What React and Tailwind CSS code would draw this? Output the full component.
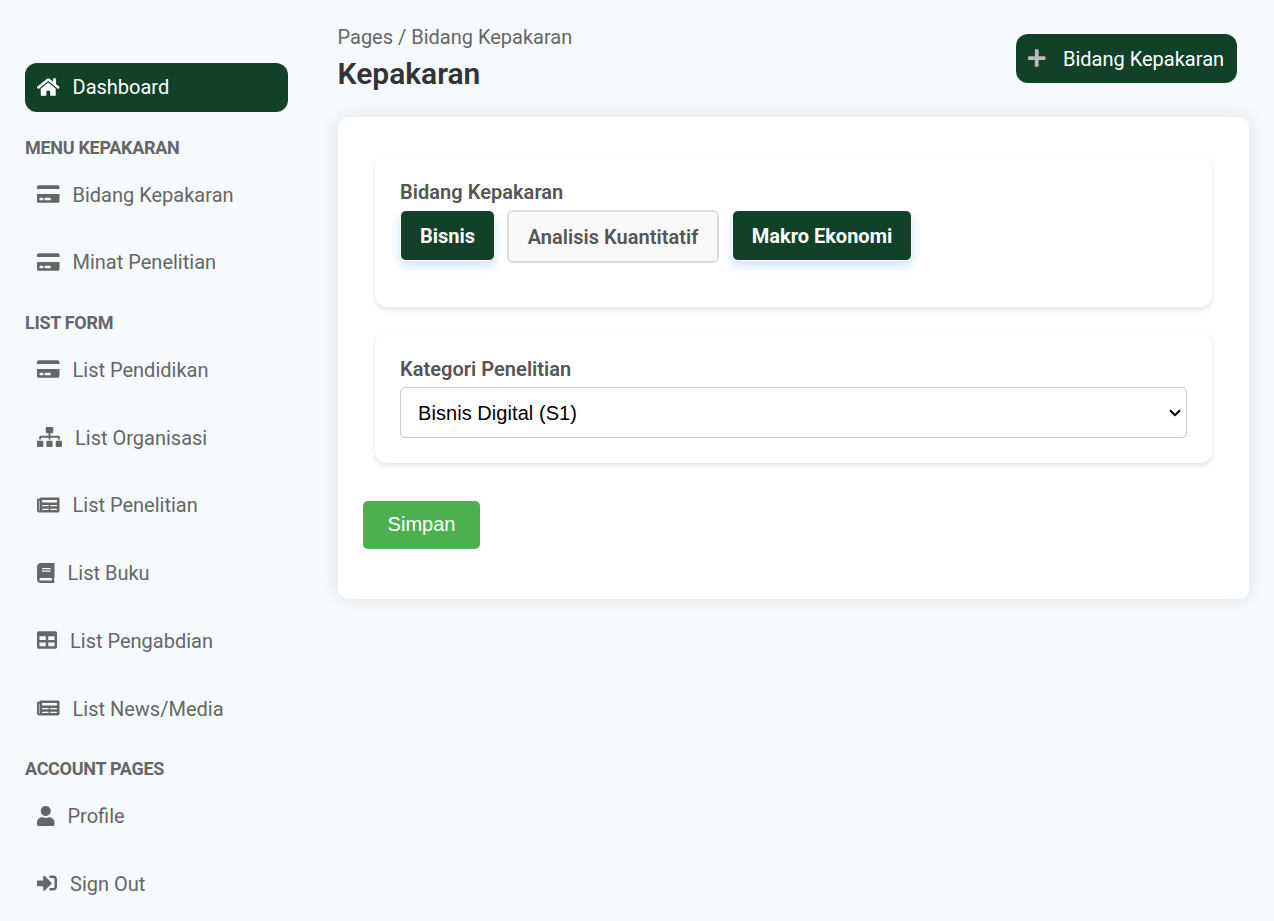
import React from "react";
import {
  FaHome,
  FaCreditCard,
  FaSitemap,
  FaNewspaper,
  FaBook,
  FaTable,
  FaUser,
  FaSignInAlt,
  FaPlus,
} from "react-icons/fa";

const menus = [
  {
    title: "MENU KEPAKARAN",
    items: [
      { label: "Bidang Kepakaran", icon: FaCreditCard, size: "w-[22.5px]" },
      { label: "Minat Penelitian", icon: FaCreditCard, size: "w-[22.5px]" },
    ],
  },
  {
    title: "LIST FORM",
    items: [
      { label: "List Pendidikan", icon: FaCreditCard, size: "w-[22.5px]" },
      { label: "List Organisasi", icon: FaSitemap, size: "w-[25px]" },
      { label: "List Penelitian", icon: FaNewspaper, size: "w-[22.5px]" },
      { label: "List Buku", icon: FaBook, size: "w-[17.5px]" },
      { label: "List Pengabdian", icon: FaTable, size: "w-5" },
      { label: "List News/Media", icon: FaNewspaper, size: "w-[22.5px]" },
    ],
  },
  {
    title: "ACCOUNT PAGES",
    items: [
      { label: "Profile", icon: FaUser, size: "w-[17.5px]" },
      { label: "Sign Out", icon: FaSignInAlt, size: "w-5" },
    ],
  },
];

function NavItem({ label, icon: Icon, size, active }) {
  return (
    <a
      className={
        "flex h-[48.5px] items-center gap-[13px] rounded-[12px] px-[12px] text-[20px] leading-6 " +
        (active ? "bg-[#114229] text-white" : "text-[#666666]")
      }
    >
      <Icon className={"mb-px h-5 shrink-0 " + size} />
      <span>{label}</span>
    </a>
  );
}

function Sidebar() {
  return (
    <aside className="w-[313px] shrink-0 pt-[63px] pr-[25px] pl-[25px]">
      <NavItem label="Dashboard" icon={FaHome} size="w-[22.5px]" active />
      {menus.map((menu) => (
        <nav key={menu.title}>
          <h2 className="mt-[26px] mb-[12.95px] text-[18px] leading-5 font-bold tracking-[-0.3px] text-[#666666]">
            {menu.title}
          </h2>
          <div className="flex flex-col gap-[19.25px]">
            {menu.items.map((item) => (
              <NavItem key={item.label} {...item} />
            ))}
          </div>
        </nav>
      ))}
    </aside>
  );
}

function Panel({ title, className, children }) {
  return (
    <section
      className={
        "rounded-[12px] bg-white px-[25px] pt-[25px] shadow-[0_2.5px_5px_rgba(0,0,0,0.1)] " + className
      }
    >
      <h3 className="h-[30px] text-[20px] leading-6 font-semibold tracking-[0.04px] text-[#555555]">{title}</h3>
      {children}
    </section>
  );
}

function ActiveChip({ children, className }) {
  return (
    <button
      className={
        "h-[51px] rounded-[6px] border border-white bg-[#114229] text-[20px] leading-6 font-bold text-white shadow-[0_5px_10px_rgba(0,123,255,0.2)] " +
        className
      }
    >
      {children}
    </button>
  );
}

export default function App() {
  return (
    <div className="flex min-h-screen bg-[#f6fafd] font-['Roboto',sans-serif]">
      <Sidebar />
      <main className="flex-1 pr-[25px] pl-[25px]">
        <header className="flex h-[117px] items-start justify-between pr-[12px]">
          <div className="-ml-[0.5px] pt-[25px]">
            <p className="text-[20px] leading-6 text-[#666666]">Pages / Bidang Kepakaran</p>
            <h1 className="mt-[7px] text-[30px] leading-9 font-semibold text-[#333333]">Kepakaran</h1>
          </div>
          <button className="mt-[34px] flex h-[49px] w-[221px] items-center rounded-[12px] bg-[#114229] pl-[12px] text-[20px] leading-6 text-white">
            <FaPlus className="mb-px h-5 w-[17.5px] text-[#bbbbbb]" />
            <span className="ml-[17.5px] whitespace-nowrap">Bidang Kepakaran</span>
          </button>
        </header>

        <div className="h-[482px] rounded-[10px] bg-white px-[25px] pt-[38px] shadow-[0_0_20px_rgba(0,0,0,0.1)]">
          <div className="flex flex-col gap-[25px] px-[12px]">
            <Panel title="Bidang Kepakaran" className="h-[152px]">
              <div className="flex items-start">
                <ActiveChip className="w-[95px]">Bisnis</ActiveChip>
                <button className="ml-[12px] h-[53px] w-[212px] rounded-[6px] border-2 border-[#dddddd] bg-[#f9f9f9] text-[20px] leading-6 font-semibold tracking-[0.03px] text-[#555555]">
                  Analisis Kuantitatif
                </button>
                <ActiveChip className="ml-[13px] w-[180px]">Makro Ekonomi</ActiveChip>
              </div>
            </Panel>

            <Panel title="Kategori Penelitian" className="h-[131px]">
              <div className="relative">
                <select className="block h-[51px] w-full appearance-none rounded-[5px] border border-[#cccccc] bg-white pl-[17px] font-['Liberation_Sans',Arial,sans-serif] text-[20px] tracking-[0.06px] text-black">
                  <option>Bisnis Digital (S1)</option>
                </select>
                <svg
                  className="pointer-events-none absolute top-[22px] right-[6px] h-2 w-3"
                  viewBox="0 0 12 8"
                  fill="none"
                  stroke="black"
                  strokeWidth="2"
                >
                  <path d="M1 1.2 L6 6.2 L11 1.2" />
                </svg>
              </div>
            </Panel>
          </div>

          <button className="mt-[38px] h-[48px] w-[117px] rounded-[5px] bg-[#4caf50] pb-[2px] font-['Liberation_Sans',Arial,sans-serif] text-[20px] text-white">
            Simpan
          </button>
        </div>
      </main>
    </div>
  );
}
